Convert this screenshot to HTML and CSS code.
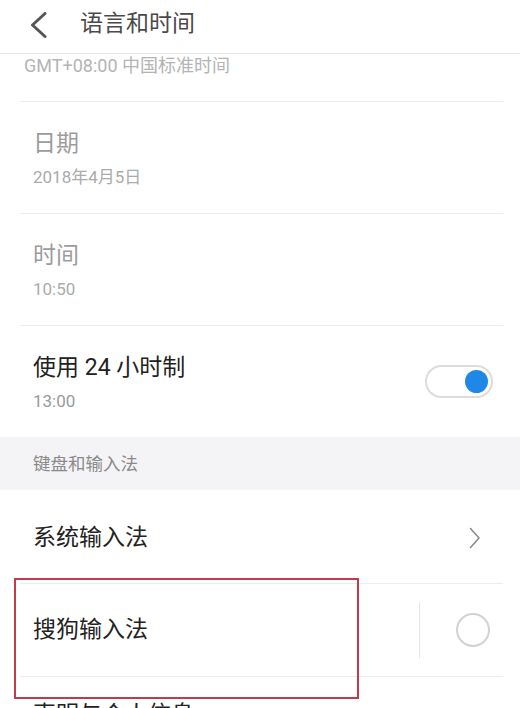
FILE: index.html
```html
<!DOCTYPE html>
<html lang="zh-CN">
<head>
<meta charset="utf-8">
<title>语言和时间</title>
<link rel="stylesheet" href="styles.css">
</head>
<body>
<div class="page">
  <header class="header">
    <svg class="back" width="20" height="28" viewBox="0 0 20 28">
      <path d="M16 1.5 L3.5 13 L16 24.5" fill="none" stroke="#555" stroke-width="3" stroke-linecap="round" stroke-linejoin="round"/>
    </svg>
    <h1 class="title">语言和时间</h1>
  </header>

  <div class="row row-tz">
    <span class="sub">GMT+08:00 中国标准时间</span>
  </div>

  <div class="row row-two">
    <div class="main disabled">日期</div>
    <div class="sub">2018年4月5日</div>
  </div>

  <div class="row row-two">
    <div class="main disabled">时间</div>
    <div class="sub">10:50</div>
  </div>

  <div class="row row-two row-switch no-border">
    <div class="text">
      <div class="main">使用 24 小时制</div>
      <div class="sub dark-sub">13:00</div>
    </div>
    <div class="toggle"><span class="knob"></span></div>
  </div>

  <div class="section">键盘和输入法</div>

  <div class="row row-nav">
    <div class="main">系统输入法</div>
    <svg class="chev" width="12" height="22" viewBox="0 0 12 22">
      <path d="M1.5 1.5 L10 11 L1.5 20.5" fill="none" stroke="#8a8a8a" stroke-width="1.6" stroke-linecap="round" stroke-linejoin="round"/>
    </svg>
  </div>

  <div class="row row-ime">
    <div class="main grow">搜狗输入法</div>
    <span class="vline"></span>
    <span class="radio"></span>
  </div>

  <div class="row row-last no-border">
    <div class="main">声明与个人信息</div>
  </div>

  <div class="highlight"></div>
</div>
</body>
</html>
```

FILE: styles.css
```css
html, body {
  margin: 0;
  padding: 0;
  background: #ffffff;
}

.page {
  position: relative;
  width: 520px;
  height: 708px;
  overflow: hidden;
  font-family: Roboto, "Noto Sans CJK SC", "Noto Sans", sans-serif;
  background: #ffffff;
}

.header {
  height: 53px;
  border-bottom: 1px solid #e6e6e6;
  display: flex;
  align-items: center;
}

.back {
  margin-left: 29px;
  margin-top: -2px;
}

.title {
  margin: -6px 0 0 31px;
  font-size: 23px;
  font-weight: normal;
  color: #4a4a4a;
  line-height: 30px;
}

.row {
  margin: 0 17px 0 20px;
  padding-left: 13px;
  border-bottom: 1px solid #ececec;
  box-sizing: border-box;
}

.no-border {
  border-bottom: none;
}

.row-tz {
  height: 48px;
  padding-top: 2px;
  padding-left: 4px;
}

.row-tz .sub {
  display: block;
  font-size: 18px;
  line-height: 20px;
  color: #b4b4b4;
}

.main {
  font-size: 23px;
  line-height: 30px;
  color: #222222;
}

.main.disabled {
  color: #9c9c9c;
}

.sub {
  font-size: 17px;
  line-height: 20px;
  color: #ababab;
}

.dark-sub {
  color: #9a9a9a;
}

.row-two {
  height: 112px;
  padding-top: 27px;
}

.row-two .sub {
  margin-top: 8px;
}

.row-switch {
  height: 111px;
  display: flex;
  align-items: flex-start;
  justify-content: space-between;
  padding-right: 10px;
}

.toggle {
  margin-top: 12px;
  width: 68px;
  height: 33px;
  box-sizing: border-box;
  border: 2px solid #dcdcdc;
  border-radius: 17px;
  display: flex;
  align-items: center;
  justify-content: flex-end;
  padding-right: 3px;
}

.knob {
  width: 23px;
  height: 23px;
  border-radius: 50%;
  background: #1f87e6;
}

.section {
  height: 53px;
  background: #f4f3f6;
  padding-left: 33px;
  font-size: 17.5px;
  line-height: 54px;
  color: #8a8a8a;
}

.row-nav {
  height: 94px;
  display: flex;
  align-items: center;
  justify-content: space-between;
  padding-right: 22px;
  padding-top: 2px;
}

.row-ime {
  height: 93px;
  display: flex;
  align-items: center;
  padding-right: 13px;
}

.grow {
  flex: 1;
}

.vline {
  width: 1px;
  height: 56px;
  background: #e6e6e6;
  margin-right: 36px;
}

.radio {
  width: 34px;
  height: 34px;
  box-sizing: border-box;
  border: 2px solid #d2d2d2;
  border-radius: 50%;
}

.row-last {
  padding-top: 23px;
}

.highlight {
  position: absolute;
  left: 14px;
  top: 578px;
  width: 345px;
  height: 121px;
  box-sizing: border-box;
  border: 2px solid #c23a4b;
  pointer-events: none;
}
```
